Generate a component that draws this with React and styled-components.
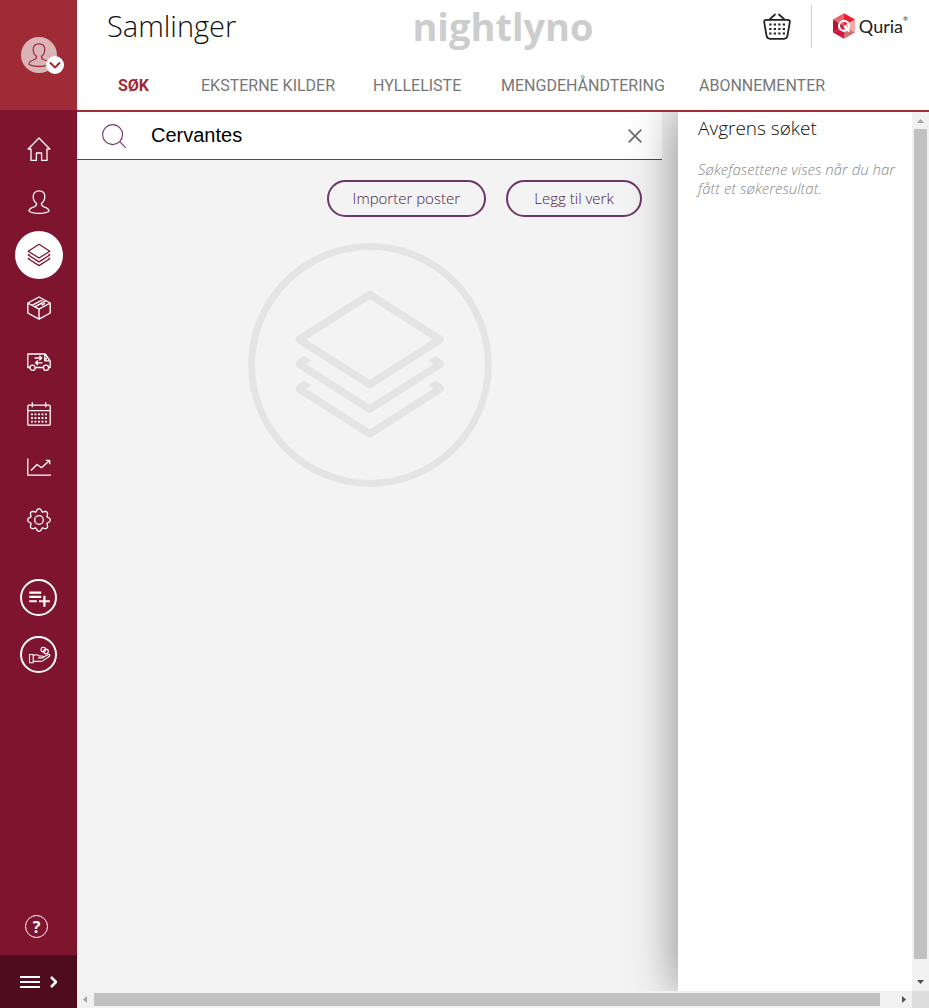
import React from 'react';
import styled, { createGlobalStyle } from 'styled-components';
import { MdPlaylistAdd } from 'react-icons/md';

const c = {
  wine: '#7f142f',
  red: '#9f2b36',
  dark: '#4e0c1e',
  plum: '#6b3668',
  page: '#f3f3f3',
};

const GlobalStyle = createGlobalStyle`
  *, *::before, *::after { box-sizing: border-box; }
  body { margin: 0; background: ${c.page}; font-family: "Open Sans", sans-serif; color: #222; }
  button, input { font: inherit; color: inherit; }
  a { text-decoration: none; color: inherit; }
  svg { display: block; flex: none; }
`;

const Shell = styled.div`
  display: grid;
  grid-template-columns: 77px minmax(0, 1fr);
  min-height: 100vh;
`;

/* Sidebar */
const Sidebar = styled.aside`
  display: flex;
  flex-direction: column;
  background: ${c.wine};
  color: #fff;
`;

const Account = styled.div`
  display: flex;
  align-items: center;
  justify-content: center;
  height: 110px;
  background: ${c.red};
`;

const Avatar = styled.button`
  position: relative;
  display: flex;
  align-items: center;
  justify-content: center;
  width: 36px;
  height: 36px;
  padding: 0;
  border: 0;
  border-radius: 50%;
  background: #dbb4b7;
  color: ${c.red};
`;

const AvatarBadge = styled.span`
  position: absolute;
  right: -7px;
  bottom: -1px;
  display: flex;
  align-items: center;
  justify-content: center;
  width: 18px;
  height: 18px;
  border-radius: 50%;
  background: #fff;
`;

const SideNav = styled.nav`
  display: flex;
  flex-direction: column;
  align-items: center;
  gap: 5px;
  padding-top: 15px;
`;

const SideLink = styled.a`
  display: flex;
  align-items: center;
  justify-content: center;
  width: 48px;
  height: 48px;
  border-radius: 50%;
  background: ${(p) => (p.$active ? '#fff' : 'transparent')};
  color: ${(p) => (p.$active ? c.wine : '#fff')};
`;

const QuickActions = styled.div`
  display: flex;
  flex-direction: column;
  align-items: center;
  gap: 20px;
  padding-top: 35px;
`;

const RoundButton = styled.button`
  display: flex;
  align-items: center;
  justify-content: center;
  width: 37px;
  height: 37px;
  padding: 0;
  border: 2px solid #fff;
  border-radius: 50%;
  background: transparent;
`;

const HelpButton = styled.button`
  width: 23px;
  height: 23px;
  margin: auto 0 17px 25px;
  padding: 0;
  border: 1px solid #fff;
  border-radius: 50%;
  background: transparent;
  font-size: 16px;
  font-weight: 700;
  line-height: 20px;
`;

const ExpandButton = styled.button`
  display: flex;
  align-items: center;
  gap: 10px;
  height: 53px;
  padding: 0 0 0 20px;
  border: 0;
  background: ${c.dark};
`;

/* Header */
const Main = styled.div`
  display: flex;
  flex-direction: column;
  min-width: 0;
`;

const Header = styled.header`
  height: 112px;
  background: #fff;
  border-bottom: 2px solid ${c.red};
`;

const TopRow = styled.div`
  display: grid;
  grid-template-columns: 1fr auto 1fr;
  align-items: center;
  height: 52px;
  padding: 0 21px;
`;

const Title = styled.h1`
  margin: 0;
  padding-left: 9px;
  font-size: 29px;
  font-weight: 300;
  line-height: 36px;
  color: #111;
`;

const Tenant = styled.div`
  font-size: 38px;
  font-weight: 700;
  line-height: 48px;
  color: #cdcdcd;
`;

const Tools = styled.div`
  display: flex;
  align-items: center;
  justify-content: flex-end;
`;

const IconButton = styled.button`
  display: flex;
  padding: 0;
  border: 0;
  background: transparent;
`;

const Divider = styled.span`
  width: 1px;
  height: 43px;
  margin: 0 20px;
  background: #ccc;
`;

const Brand = styled.a`
  display: flex;
  align-items: center;
  gap: 3px;
  font-family: Lato, sans-serif;
  font-size: 18px;
  line-height: 24px;
`;

const Registered = styled.sup`
  align-self: flex-start;
  margin-left: -3px;
  font-size: 6px;
  line-height: 12px;
`;

const Tabs = styled.nav`
  display: grid;
  grid-template-columns: 83px 172px 128px 198px auto;
  justify-content: start;
  padding-left: 41px;
`;

const Tab = styled.a`
  padding: 22px 0;
  font-family: Roboto, sans-serif;
  font-size: 16px;
  line-height: 24px;
  white-space: nowrap;
  font-weight: ${(p) => (p.$active ? 700 : 400)};
  color: ${(p) => (p.$active ? c.red : '#777')};
`;

/* Content */
const Viewport = styled.div`
  flex: 1;
  display: grid;
  grid-template-columns: minmax(0, 1fr) 17px;
  grid-template-rows: minmax(0, 1fr) 17px;
`;

const Content = styled.div`
  display: flex;
  overflow: hidden;
`;

const Workspace = styled.main`
  flex: 1;
  min-width: 0;
  padding-right: 16px;
`;

const SearchBar = styled.form`
  display: flex;
  align-items: center;
  height: 48px;
  padding: 0 20px 0 25px;
  background: #fff;
  border-bottom: 1px solid ${c.plum};
`;

const SearchInput = styled.input`
  flex: 1;
  min-width: 0;
  margin-left: 25px;
  padding: 0 0 2px;
  border: 0;
  outline: 0;
  background: transparent;
  font-family: "Liberation Sans", Arial, sans-serif;
  font-size: 20px;
  line-height: 24px;
  color: #000;
`;

const Actions = styled.div`
  display: flex;
  justify-content: flex-end;
  gap: 20px;
  padding: 20px 20px 26px;
`;

const PillButton = styled.button`
  min-width: 136px;
  height: 37px;
  padding: 0 24px 2px;
  border: 2px solid ${c.plum};
  border-radius: 19px;
  background: transparent;
  font-size: 15px;
  font-weight: 300;
  line-height: 24px;
  color: #4a1c46;
`;

const Placeholder = styled.div`
  display: flex;
  justify-content: center;
  color: #e4e4e4;
`;

const Facets = styled.aside`
  flex: none;
  width: 234px;
  padding: 3px 4px 20px 20px;
  background: #fff;
  box-shadow: 0 0 45px rgba(0, 0, 0, 0.45);
`;

const FacetTitle = styled.h2`
  margin: 0;
  font-size: 19px;
  font-weight: 300;
  line-height: 26px;
  color: #111;
`;

const FacetHint = styled.p`
  margin: 19px 0 0;
  font-size: 15px;
  font-style: italic;
  font-weight: 300;
  line-height: 19px;
  color: #888;
`;

const ScrollTrack = styled.div`
  display: flex;
  flex-direction: ${(p) => (p.$vertical ? 'column' : 'row')};
  align-items: center;
  justify-content: space-between;
  background: #f1f1f1;
`;

const ScrollThumb = styled.div`
  flex: 1;
  ${(p) => (p.$vertical ? 'width: 13px; margin-bottom: 15px;' : 'height: 13px; margin-right: 15px;')}
  background: #c1c1c1;
`;

const Corner = styled.div`
  background: #dcdcdc;
`;

/* Icons */
const Svg = ({ children, size = 24, width = 1.3, box = '0 0 24 24', h, ...rest }) => (
  <svg width={size} height={h || size} viewBox={box} fill="none" stroke="currentColor"
    strokeWidth={width} strokeLinejoin="round" aria-hidden="true" {...rest}>
    {children}
  </svg>
);

const HomeIcon = () => (
  <Svg><path d="M12 1 1.2 12H4v11.4h5.4V16h5.2v7.4H20V12h2.8z" /></Svg>
);

const PersonIcon = ({ width }) => (
  <Svg width={width}>
    <path d="M9.6 13.4C7 11.400 6.200 8.500 6.200 6.400 6.200 3 8.600.9 12 .9s5.800 2.100 5.800 5.500c0 2.100-.8 5-3.400 7 0 1.900.6 2.700 2.600 3.400 3.200 1 5 2.200 5 4.400-2.500 1.600-6 2.200-10 2.200S4.500 22.800 2 21.200c0-2.200 1.800-3.400 5-4.400 2-.7 2.600-1.500 2.600-3.400z" />
  </Svg>
);

const LayerEdge = ({ dy }) => (
  <g transform={`translate(0 ${dy})`}>
    <path d="M59.500 129.300 129.700 174.200 199.900 129.300" strokeLinecap="round" />
    <path d="M64 121 71 125.500 62 131 56.300 126.500Q57 125 64 121z" fill="currentColor" stroke="none" />
    <path d="M195.400 121 188.400 125.500 197.400 131 203.100 126.500Q202.400 125 195.400 121z" fill="currentColor" stroke="none" />
  </g>
);

const LayerShape = () => (
  <>
    <path d="M129.700 59.500 200 104.500 129.700 149.500 59.300 104.500z" />
    <LayerEdge dy={0} />
    <LayerEdge dy={24.7} />
  </>
);

const LayersIcon = () => <Svg box="51 51 157 157" width={8.5}><LayerShape /></Svg>;

const LayersEmblem = () => (
  <Svg size={244} box="8 8 244 244" width={7.5}>
    <circle cx="130" cy="130" r="118.400" strokeWidth="7" />
    <LayerShape />
  </Svg>
);

const BoxIcon = () => (
  <Svg width={1.4}>
    <path d="M12 1 23.200 7v10L12 23.200.8 17V7zM.8 7 12 13.200 23.200 7M12 13.200v10M5 9.300 16.300 3.300M7.800 10.800 19 4.700M14.500 9.200l3.500-1.900" />
  </Svg>
);

const TruckIcon = () => (
  <Svg width={1.3}>
    <path d="M3 18.500H.8V5h17.400L23.200 12v6.500h-1.500M8.300 18.500h8M17.800 5v6.800h5.200M17.800 11.800l2-3" />
    <circle cx="5.600" cy="18.800" r="2.600" /><circle cx="19" cy="18.800" r="2.600" />
    <path d="M7.500 9h7M12.300 6.800l2.500 2.200-2.500 2.200M15.500 13.800h-7M11 11.600l-2.500 2.200 2.500 2.200" />
  </Svg>
);

const CalendarIcon = () => (
  <Svg>
    <rect x=".8" y="3.200" width="22.400" height="20" rx="1" />
    <path d="M.8 8.600h22.400M5.300.3v5M18.700.3v5" />
    {[12.4, 16, 19.600].map((y) => (
      <path key={y} d={`M4 ${y}h16`} strokeWidth="1.900" strokeDasharray="1.900 1.600" />
    ))}
  </Svg>
);

const ChartIcon = () => (
  <Svg><path d="M.8 3.500v16.700H24M4 15.500 10 9.500l4.500 3.200 8-7.200M18.800 5.300h3.900v3.900" /></Svg>
);

const gearPath = Array.from({ length: 96 }, (_, i) => {
  const t = (i / 96) * Math.PI * 2;
  const r = 10.1 + 1.3 * Math.cos(8 * t) - 0.15 * Math.cos(16 * t);
  return `${(12 + r * Math.sin(t)).toFixed(2)} ${(12 - r * Math.cos(t)).toFixed(2)}`;
}).join('L');

const GearIcon = () => (
  <Svg><path d={`M${gearPath}z`} /><circle cx="12" cy="12" r="4.300" /></Svg>
);

const HandIcon = () => (
  <Svg width={1.1}>
    <path d="M2.500 11.500h3.700v8.300H2.500zM6.200 12.800c2-1.400 4.200-1.300 6 .2h3.200c1.300 0 1.300 1.900 0 1.900H11M16.500 14l4.800-2.500c1.300-.5 2.200.9 1.100 1.700l-6.200 4.400c-1 .6-2 .8-3.200.8H6.200" />
    <circle cx="16.300" cy="6.500" r="2.300" /><circle cx="19" cy="8.400" r="2.300" />
  </Svg>
);

const SearchIcon = () => (
  <Svg color={c.plum} width={1.1}><circle cx="10.600" cy="10.600" r="10" /><path d="m17.700 17.700 6 6" /></Svg>
);

const BasketIcon = () => (
  <Svg size={28} h={27} box="0 0 28 27" width={1.8} strokeLinecap="round">
    <path d="M12 1.500 6.600 6.300M16 1.500l5.400 4.800" />
    <path d="M3.300 6.800h21.400c1.600 0 2.300.9 2.100 2.300l-2.300 13.600c-.4 2.200-1.500 3.100-3.500 3.100H7c-2 0-3.100-.9-3.500-3.100L1.200 9.100C1 7.700 1.700 6.800 3.300 6.800z" />
    {[11.500, 16, 20.500].map((y) => (
      <path key={y} d={`M6.200 ${y}h15.900`} strokeWidth="2" strokeLinecap="butt" strokeDasharray="2.300 2.200" />
    ))}
  </Svg>
);

const HexLogo = () => (
  <svg width="24" height="26" viewBox="0 0 24 26" aria-hidden="true">
    <path d="M12 .3 1 6.500 12 13z" fill="#e8636a" />
    <path d="M12 .3 23 6.500 12 13z" fill="#ed1c2e" />
    <path d="M1 6.500v13L12 13z" fill="#b5162f" />
    <path d="M23 6.500v13L12 13z" fill="#f4a9a4" />
    <path d="M1 19.500 12 25.700V13z" fill="#d3163f" />
    <path d="M23 19.500 12 25.700V13z" fill="#cf7077" />
    <circle cx="12" cy="12.800" r="5" fill="none" stroke="#fff" strokeWidth="2.200" />
    <path d="m12.300 13 5 5.500" stroke="#fff" strokeWidth="2.200" />
  </svg>
);

const sideItems = [
  ['Hjem', HomeIcon],
  ['Lånere', PersonIcon],
  ['Samlinger', LayersIcon],
  ['Innkjøp', BoxIcon],
  ['Transport', TruckIcon],
  ['Kalender', CalendarIcon],
  ['Statistikk', ChartIcon],
  ['Innstillinger', GearIcon],
];

const tabs = ['SØK', 'EKSTERNE KILDER', 'HYLLELISTE', 'MENGDEHÅNDTERING', 'ABONNEMENTER'];

const Arrow = ({ d, fill }) => (
  <svg width="17" height="17" viewBox="0 0 17 17" aria-hidden="true"><path d={d} fill={fill} /></svg>
);

export default function App() {
  return (
    <>
      <GlobalStyle />
      <Shell>
        <Sidebar>
          <Account>
            <Avatar aria-label="Konto">
              <PersonIcon width={1.2} />
              <AvatarBadge>
                <Svg size={12} box="0 0 12 12" width={2}><path d="m1 3.500 5 5 5-5" /></Svg>
              </AvatarBadge>
            </Avatar>
          </Account>
          <SideNav aria-label="Hovedmeny">
            {sideItems.map(([label, Icon]) => (
              <SideLink key={label} href="#" aria-label={label} $active={label === 'Samlinger'}>
                <Icon />
              </SideLink>
            ))}
          </SideNav>
          <QuickActions>
            <RoundButton aria-label="Legg til i liste"><MdPlaylistAdd size={26} /></RoundButton>
            <RoundButton aria-label="Utlån"><HandIcon /></RoundButton>
          </QuickActions>
          <HelpButton aria-label="Hjelp">?</HelpButton>
          <ExpandButton aria-label="Utvid meny">
            <Svg size={20} width={2} box="0 0 20 20"><path d="M0 5h20M0 10h20M0 15h20" /></Svg>
            <Svg size={8} h={12} width={2.500} box="0 0 8 12"><path d="m1 1 5 5-5 5" /></Svg>
          </ExpandButton>
        </Sidebar>

        <Main>
          <Header>
            <TopRow>
              <Title>Samlinger</Title>
              <Tenant>nightlyno</Tenant>
              <Tools>
                <IconButton aria-label="Kurv"><BasketIcon /></IconButton>
                <Divider />
                <Brand href="#">
                  <HexLogo />
                  <span>Quria</span>
                  <Registered>®</Registered>
                </Brand>
              </Tools>
            </TopRow>
            <Tabs>
              {tabs.map((t, i) => (
                <Tab key={t} href="#" $active={i === 0}>{t}</Tab>
              ))}
            </Tabs>
          </Header>

          <Viewport>
            <Content>
              <Workspace>
                <SearchBar onSubmit={(e) => e.preventDefault()}>
                  <SearchIcon />
                  <SearchInput aria-label="Søk" defaultValue="Cervantes" />
                  <IconButton type="button" aria-label="Tøm søk">
                    <Svg size={14} box="0 0 14 14" width={1.900} color="#707070"><path d="m.7.7 12.600 12.600M13.300.7.7 13.300" /></Svg>
                  </IconButton>
                </SearchBar>
                <Actions>
                  <PillButton>Importer poster</PillButton>
                  <PillButton>Legg til verk</PillButton>
                </Actions>
                <Placeholder><LayersEmblem /></Placeholder>
              </Workspace>
              <Facets>
                <FacetTitle>Avgrens søket</FacetTitle>
                <FacetHint>Søkefasettene vises når du har fått et søkeresultat.</FacetHint>
              </Facets>
            </Content>
            <ScrollTrack $vertical aria-hidden="true">
              <Arrow d="M5 11h7L8.500 7z" fill="#a3a3a3" />
              <ScrollThumb $vertical />
              <Arrow d="M5 6h7L8.500 10z" fill="#505050" />
            </ScrollTrack>
            <ScrollTrack aria-hidden="true">
              <Arrow d="M10 5v7L6 8.500z" fill="#a3a3a3" />
              <ScrollThumb />
              <Arrow d="M7 5v7l4-3.500z" fill="#505050" />
            </ScrollTrack>
            <Corner />
          </Viewport>
        </Main>
      </Shell>
    </>
  );
}
